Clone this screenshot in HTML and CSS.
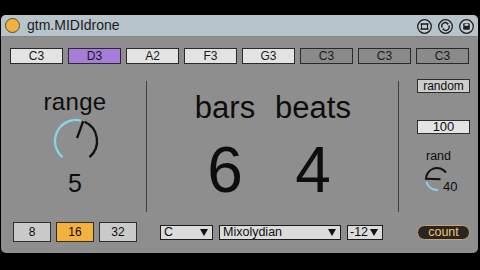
FILE: index.html
```html
<!DOCTYPE html>
<html>
<head>
<meta charset="utf-8">
<link rel="stylesheet" href="styles.css">
</head>
<body>
<div class="device">
  <header class="titlebar">
    <span class="dot"></span>
    <span class="title">gtm.MIDIdrone</span>
    <div class="ticons">
      <svg class="ticon" viewBox="0 0 15 15" width="15" height="15">
        <circle cx="7.5" cy="7.5" r="6.8" fill="#c3ced4" stroke="#1e1e1e" stroke-width="1.3"/>
        <rect x="4.5" y="5" width="6" height="5" fill="none" stroke="#1e1e1e" stroke-width="1.1"/>
        <line x1="3.2" y1="5" x2="11.8" y2="5" stroke="#1e1e1e" stroke-width="1.1"/>
        <line x1="3.2" y1="10" x2="11.8" y2="10" stroke="#1e1e1e" stroke-width="1.1"/>
      </svg>
      <svg class="ticon" viewBox="0 0 15 15" width="15" height="15">
        <circle cx="7.5" cy="7.5" r="6.8" fill="#c3ced4" stroke="#1e1e1e" stroke-width="1.3"/>
        <path d="M4.2 8.6 A3.4 3.4 0 0 1 9.6 4.6" fill="none" stroke="#1e1e1e" stroke-width="1.3"/>
        <path d="M10.8 6.4 A3.4 3.4 0 0 1 5.4 10.4" fill="none" stroke="#1e1e1e" stroke-width="1.3"/>
        <path d="M8.6 3.4 L11 4.4 L9.2 6.2 Z" fill="#1e1e1e"/>
        <path d="M6.4 11.6 L4 10.6 L5.8 8.8 Z" fill="#1e1e1e"/>
      </svg>
      <svg class="ticon" viewBox="0 0 15 15" width="15" height="15">
        <circle cx="7.5" cy="7.5" r="6.8" fill="#c3ced4" stroke="#1e1e1e" stroke-width="1.3"/>
        <rect x="4.2" y="4.2" width="6.6" height="6.6" rx="0.8" fill="#1e1e1e"/>
        <rect x="5.6" y="4.8" width="3.8" height="2" fill="#c3ced4"/>
      </svg>
    </div>
  </header>

  <div class="notes">
    <span class="chip on">C3</span>
    <span class="chip sel">D3</span>
    <span class="chip on">A2</span>
    <span class="chip on">F3</span>
    <span class="chip on">G3</span>
    <span class="chip off">C3</span>
    <span class="chip off">C3</span>
    <span class="chip off">C3</span>
  </div>

  <div class="main">
    <section class="col-range">
      <div class="lbl-range">range</div>
      <svg class="knob-big" viewBox="0 0 50 50" width="50" height="50">
        <path d="M11.5 41.1 A21 21 0 0 1 30.08 4.63" fill="none" stroke="#84d4ea" stroke-width="2.3"/>
        <path d="M33.54 5.81 A21 21 0 0 1 38.5 41.1" fill="none" stroke="#111" stroke-width="2.3"/>
        <line x1="26.03" y1="22.18" x2="32.18" y2="5.26" stroke="#111" stroke-width="2.3"/>
      </svg>
      <div class="val-range">5</div>
    </section>
    <div class="divider"></div>
    <section class="col-count">
      <div class="cell"><div class="lbl">bars</div><div class="num">6</div></div>
      <div class="cell"><div class="lbl">beats</div><div class="num">4</div></div>
    </section>
    <div class="divider"></div>
    <section class="col-rand">
      <div class="btn-random">random</div>
      <div class="numbox">100</div>
      <div class="lbl-rand">rand</div>
      <div class="knob-small-wrap">
        <svg class="knob-small" viewBox="0 0 26 26" width="26" height="26">
          <path d="M13.96 23.96 A11 11 0 0 1 2.37 15.85" fill="none" stroke="#84d4ea" stroke-width="2"/>
          <path d="M2.04 13.96 A11 11 0 0 1 22.01 6.69" fill="none" stroke="#111" stroke-width="2"/>
          <line x1="16.5" y1="13.3" x2="3" y2="12.7" stroke="#111" stroke-width="2"/>
        </svg>
        <span class="val-rand">40</span>
      </div>
    </section>
  </div>

  <div class="bottom">
    <div class="seg">
      <span class="segbtn">8</span>
      <span class="segbtn active">16</span>
      <span class="segbtn">32</span>
    </div>
    <div class="menus">
      <div class="menu w-key"><span>C</span><i class="tri"></i></div>
      <div class="menu w-mode"><span>Mixolydian</span><i class="tri"></i></div>
      <div class="menu w-oct"><span>-12</span><i class="tri"></i></div>
    </div>
    <div class="count">count</div>
  </div>
</div>
</body>
</html>
```

FILE: styles.css
```css
* { box-sizing: border-box; }

html, body {
  margin: 0;
  padding: 0;
  background: #000;
  width: 480px;
  height: 270px;
  overflow: hidden;
  font-family: "Liberation Sans", Arial, sans-serif;
  color: #0d0d0d;
}

.device {
  margin: 15px 0 0 1px;
  width: 477px;
  height: 238px;
  background: #8e8e8e;
  border-radius: 5px;
  overflow: hidden;
  display: flex;
  flex-direction: column;
}

/* title bar */
.titlebar {
  height: 22px;
  background: #b7c4cb;
  display: flex;
  align-items: center;
  padding: 0 4px 0 4px;
  border-bottom: 1px solid #7c868b;
}
.dot {
  width: 15px;
  height: 15px;
  border-radius: 50%;
  background: #f2b240;
  border: 1px solid #5a4a30;
}
.title {
  margin-left: 7px;
  font-size: 14px;
  color: #1b1b1b;
  margin-top: -1px;
}
.ticons {
  margin-left: auto;
  display: flex;
  gap: 6px;
  margin-top: 2px;
}
.ticon { display: block; }

/* note chips */
.notes {
  display: flex;
  gap: 5px;
  padding: 11px 0 0 9px;
}
.chip {
  width: 53px;
  height: 16px;
  border: 1px solid #2a2a2a;
  display: flex;
  align-items: center;
  justify-content: center;
  font-size: 12px;
  color: #1a1a1a;
}
.chip.on { background: #e3e3e3; }
.chip.sel { background: #a67ddb; }
.chip.off { background: #8a8a8a; }

/* main area */
.main {
  margin-top: 13px;
  height: 137px;
  display: grid;
  grid-template-columns: 145px 1px 251px 1px 1fr;
}
.divider {
  background: #3e3e3e;
  margin: 4px 0 2px;
}

.col-range {
  display: flex;
  flex-direction: column;
  align-items: center;
  padding: 13px 0 0 3px;
}
.lbl-range {
  font-size: 24px;
  line-height: 24px;
  letter-spacing: 0.3px;
}
.knob-big {
  display: block;
  margin: 2px 0 0 2px;
}
.val-range {
  font-size: 25px;
  line-height: 25px;
  margin-top: 5px;
}

.col-count {
  display: grid;
  grid-template-columns: 88px 88px;
  justify-content: center;
  padding: 15px 7px 0 0;
}
.cell {
  display: flex;
  flex-direction: column;
  align-items: center;
}
.lbl {
  font-size: 31px;
  line-height: 31px;
}
.num {
  font-size: 64px;
  line-height: 64px;
  margin-top: 15px;
}

.col-rand {
  display: flex;
  flex-direction: column;
  padding-top: 2px;
}
.btn-random {
  margin-left: 18px;
  width: 53px;
  height: 14px;
  background: #cdcdcd;
  border: 1px solid #2e2e2e;
  font-size: 12px;
  line-height: 12px;
  text-align: center;
}
.numbox {
  margin: 27px 0 0 18px;
  width: 53px;
  height: 14px;
  background: #e4e4e4;
  border: 1px solid #2e2e2e;
  font-size: 13px;
  line-height: 12px;
  text-align: center;
}
.lbl-rand {
  margin-top: 16px;
  font-size: 12.5px;
  line-height: 13px;
  text-align: center;
}
.knob-small-wrap {
  position: relative;
  margin: 3px 0 0 25px;
  width: 26px;
  height: 26px;
}
.knob-small { display: block; }
.val-rand {
  position: absolute;
  left: 19px;
  top: 14px;
  font-size: 13px;
  line-height: 13px;
}

/* bottom row */
.bottom {
  margin-top: 8px;
  height: 20px;
  display: flex;
  align-items: center;
  padding-left: 12px;
}
.seg {
  display: flex;
  gap: 5px;
}
.segbtn {
  width: 38px;
  height: 20px;
  background: #c9c9c9;
  border: 1px solid #2e2e2e;
  font-size: 12px;
  display: flex;
  align-items: center;
  justify-content: center;
}
.segbtn.active { background: #f3b13e; }

.menus {
  display: flex;
  gap: 6px;
  margin-left: 23px;
}
.menu {
  height: 15px;
  background: #dcdcdc;
  border: 1px solid #1c1c1c;
  display: flex;
  align-items: center;
  justify-content: space-between;
  padding: 0 4px 0 3px;
  font-size: 12.5px;
}
.w-key { width: 53px; }
.w-mode { width: 122px; }
.w-oct { width: 36px; padding-left: 2px; }
.tri {
  width: 0;
  height: 0;
  border-left: 4px solid transparent;
  border-right: 4px solid transparent;
  border-top: 7px solid #111;
}

.count {
  margin: 0 8px 0 auto;
  width: 53px;
  height: 15px;
  border-radius: 8px;
  background: #2a2521;
  border: 1px solid #c8a46c;
  color: #f2c47a;
  font-size: 12.5px;
  line-height: 13px;
  text-align: center;
}
```
